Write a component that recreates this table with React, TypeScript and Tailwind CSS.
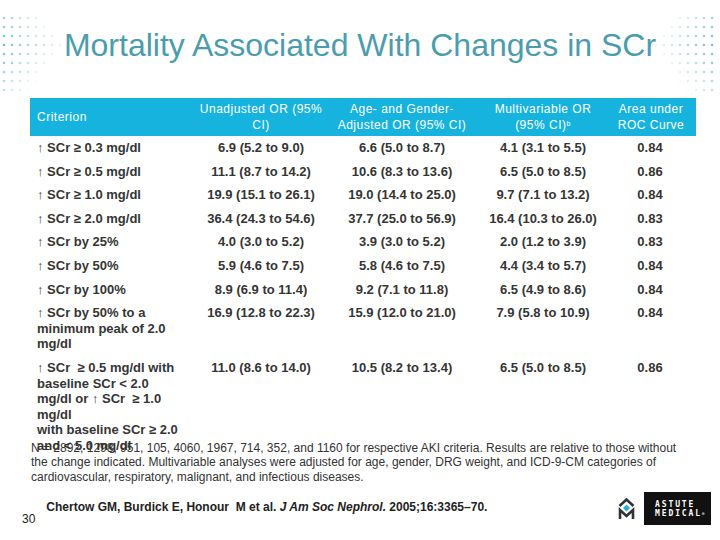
import React from "react";

const rows = [
  { crit: ["↑ SCr ≥ 0.3 mg/dl"], vals: ["6.9 (5.2 to 9.0)", "6.6 (5.0 to 8.7)", "4.1 (3.1 to 5.5)", "0.84"] },
  { crit: ["↑ SCr ≥ 0.5 mg/dl"], vals: ["11.1 (8.7 to 14.2)", "10.6 (8.3 to 13.6)", "6.5 (5.0 to 8.5)", "0.86"] },
  { crit: ["↑ SCr ≥ 1.0 mg/dl"], vals: ["19.9 (15.1 to 26.1)", "19.0 (14.4 to 25.0)", "9.7 (7.1 to 13.2)", "0.84"] },
  { crit: ["↑ SCr ≥ 2.0 mg/dl"], vals: ["36.4 (24.3 to 54.6)", "37.7 (25.0 to 56.9)", "16.4 (10.3 to 26.0)", "0.83"] },
  { crit: ["↑ SCr by 25%"], vals: ["4.0 (3.0 to 5.2)", "3.9 (3.0 to 5.2)", "2.0 (1.2 to 3.9)", "0.83"] },
  { crit: ["↑ SCr by 50%"], vals: ["5.9 (4.6 to 7.5)", "5.8 (4.6 to 7.5)", "4.4 (3.4 to 5.7)", "0.84"] },
  { crit: ["↑ SCr by 100%"], vals: ["8.9 (6.9 to 11.4)", "9.2 (7.1 to 11.8)", "6.5 (4.9 to 8.6)", "0.84"] },
  {
    crit: ["↑ SCr by 50% to a", "minimum peak of 2.0", "mg/dl"],
    vals: ["16.9 (12.8 to 22.3)", "15.9 (12.0 to 21.0)", "7.9 (5.8 to 10.9)", "0.84"],
  },
  {
    crit: [
      "↑ SCr  ≥ 0.5 mg/dl with",
      "baseline SCr < 2.0",
      "mg/dl or ↑ SCr  ≥ 1.0",
      "mg/dl",
      "with baseline SCr ≥ 2.0",
      "and < 5.0 mg/dl",
    ],
    vals: ["11.0 (8.6 to 14.0)", "10.5 (8.2 to 13.4)", "6.5 (5.0 to 8.5)", "0.86"],
  },
];

// corner dot pattern, fading away from the page edge
function Dots({ flip }: { flip?: boolean }) {
  const dots = [];
  for (let r = 0; r < 9; r++) {
    for (let c = 0; c < 8; c++) {
      const x = 4 + c * 8;
      const y = 4 + r * 9;
      const fade = 1 - c / 8 - Math.abs(r - 3) / 9;
      if (fade <= 0.05) continue;
      dots.push(
        <circle key={`${r}-${c}`} cx={flip ? 66 - x : x} cy={y} r={1.3} fill="#4aa9c0" opacity={fade * 0.75} />
      );
    }
  }
  return (
    <svg width="70" height="80" viewBox="0 0 70 80">
      {dots}
    </svg>
  );
}

function AstuteMark() {
  return (
    <svg width="17" height="22" viewBox="0 0 17 22">
      <polyline points="1.5,8 8.5,1.5 15.5,8" fill="none" stroke="#2f3437" strokeWidth="2.6" />
      <polygon points="8.5,6.5 12,10 8.5,13.5 5,10" fill="#2aaed0" />
      <polyline points="2,21 2,12 8.5,18 15,12 15,21" fill="none" stroke="#2f3437" strokeWidth="2.6" />
    </svg>
  );
}

export default function App() {
  return (
    <div className="relative w-[720px] h-[540px] overflow-hidden bg-white font-['Liberation_Sans',Arial,sans-serif]">
      {/* decorative corner dots */}
      <div className="absolute left-0 top-[14px]">
        <Dots />
      </div>
      <div className="absolute right-0 top-[14px]">
        <Dots flip />
      </div>

      <h1 className="pt-[27px] text-center text-[32px] leading-[37px] text-[#4b9dae] font-normal">
        Mortality Associated With Changes in SCr
      </h1>

      <div className="mt-[34px] ml-[30px] w-[666px]">
        <div className="grid grid-cols-[160px_142px_140px_142px_82px] bg-[#17b3df] text-white text-[12px] leading-[16px] tracking-[0.5px] py-[3px]">
          <div className="self-center pl-[7px]">Criterion</div>
          <div className="text-center">
            Unadjusted OR (95%
            <br />
            CI)
          </div>
          <div className="text-center">
            Age- and Gender-
            <br />
            Adjusted OR (95% CI)
          </div>
          <div className="text-center">
            Multivariable OR
            <br />
            (95% CI)<sup className="text-[7px]">b</sup>
          </div>
          <div className="text-center pr-[8px]">
            Area under
            <br />
            ROC Curve
          </div>
        </div>

        {rows.map((row, i) => (
          <div
            key={i}
            className="grid grid-cols-[160px_142px_140px_142px_82px] text-[13px] leading-[15.6px] font-bold text-[#353535] py-[4px]"
          >
            <div className="pl-[7px] whitespace-nowrap">
              {row.crit.map((line, j) => (
                <div key={j} className="whitespace-pre">
                  {line}
                </div>
              ))}
            </div>
            <div className="text-center whitespace-nowrap">{row.vals[0]}</div>
            <div className="text-center whitespace-nowrap">{row.vals[1]}</div>
            <div className="text-center whitespace-nowrap">{row.vals[2]}</div>
            <div className="text-center whitespace-nowrap pr-[10px]">{row.vals[3]}</div>
          </div>
        ))}
      </div>

      <div className="-mt-[17px] pl-[31px] text-[12px] leading-[14.5px] text-[#333] whitespace-nowrap">
        <div>
          N = 2892, 1298, 951, 105, 4060, 1967, 714, 352, and 1160 for respective AKI criteria.{"  "}Results are relative to those without
        </div>
        <div>
          the change indicated. Multivariable analyses were adjusted for age, gender, DRG weight, and ICD-9-CM categories of
        </div>
        <div>cardiovascular, respiratory, malignant, and infectious diseases.</div>
      </div>

      <div className="mt-[7px] flex items-start pl-[22px] pr-[9px]">
        <div className="mt-[21px] text-[12px] leading-[14px] text-[#222]">30</div>
        <div className="ml-[11px] mt-[9px] text-[12px] leading-[14px] font-bold text-[#222] whitespace-pre">
          Chertow GM, Burdick E, Honour  M et al. <i>J Am Soc Nephrol.</i> 2005;16:3365–70.
        </div>
        <div className="ml-auto flex items-start gap-[9px]">
          <div className="mt-[7px]">
            <AstuteMark />
          </div>
          <div className="mt-[1px] w-[67px] h-[33px] bg-[#111] flex flex-col justify-center pl-[11px] text-white font-['DejaVu_Sans_Mono',monospace] font-bold text-[8px] leading-[9px] tracking-[1.9px]">
            <div>ASTUTE</div>
            <div>
              MEDICAL<span className="text-[4px] align-top tracking-normal">®</span>
            </div>
          </div>
        </div>
      </div>
    </div>
  );
}
